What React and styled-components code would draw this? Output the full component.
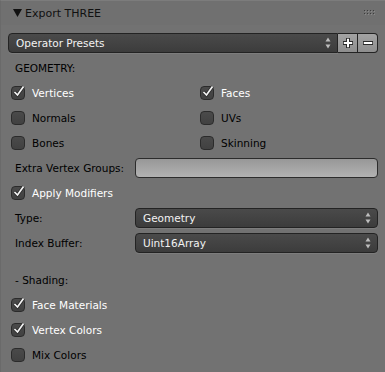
import React from 'react';
import styled, { createGlobalStyle } from 'styled-components';

const GlobalStyle = createGlobalStyle`
    html, body {
        margin: 0;
        padding: 0;
        background: #727272;
    }
    body {
        font-family: 'DejaVu Sans', 'Liberation Sans', sans-serif;
    }
`;

const Panel = styled.div`
    width: 385px;
    height: 372px;
    box-sizing: border-box;
    background: #727272;
    border-top: 1px solid #7c7c7c;
    border-left: 1px solid #6a6a6a;
    overflow: hidden;
`;

const Header = styled.div`
    height: 24px;
    display: flex;
    align-items: center;
    padding: 0 9px 0 12px;
    background: #707070;
    color: #111;
    font-size: 11px;

    & .title {
        margin-left: 3px;
        flex: 1;
    }
`;

const Body = styled.div`
    display: flex;
    flex-direction: column;
    gap: 5px;
    padding: 8px 7px 0 7px;
`;

const Row = styled.div`
    height: 20px;
    display: flex;
    align-items: center;
    margin-top: ${(props) => (props.spaced ? '12px' : '0')};
`;

const Columns = styled.div`
    height: 20px;
    display: grid;
    grid-template-columns: 189px 1fr;
    align-items: center;
`;

const FieldRow = styled.div`
    height: 20px;
    display: grid;
    grid-template-columns: 127px 1fr;
    align-items: center;
`;

const Label = styled.div`
    font-size: 10.5px;
    color: #000;
    padding-left: 7px;
    white-space: nowrap;
`;

const Menu = styled.div`
    flex: 1;
    height: 20px;
    box-sizing: border-box;
    display: flex;
    align-items: center;
    padding: 0 6px 0 7px;
    border: 1px solid #232323;
    border-radius: ${(props) => (props.joined ? '4px 0 0 4px' : '4px')};
    background: linear-gradient(#4a4a4a, #3c3c3c);
    box-shadow: 0 1px 0 rgba(255, 255, 255, 0.08);
    color: #f2f2f2;
    font-size: 10.5px;

    & span {
        flex: 1;
    }
`;

const TextField = styled.div`
    height: 20px;
    box-sizing: border-box;
    border: 1px solid #2c2c2c;
    border-radius: 4px;
    background: linear-gradient(#979797, #b2b2b2);
`;

const IconButton = styled.div`
    width: 20px;
    height: 20px;
    box-sizing: border-box;
    display: flex;
    align-items: center;
    justify-content: center;
    border: 1px solid #232323;
    border-left: none;
    border-radius: ${(props) => (props.last ? '0 4px 4px 0' : '0')};
    background: linear-gradient(#a3a3a3, #8e8e8e);
`;

const Check = styled.div`
    display: flex;
    align-items: center;
    margin-left: 3px;
    font-size: 10.5px;
    color: ${(props) => (props.on ? '#ffffff' : '#000000')};
    white-space: nowrap;
`;

const Box = styled.div`
    position: relative;
    width: 14px;
    height: 14px;
    box-sizing: border-box;
    margin-right: 7px;
    border: 1px solid #2b2b2b;
    border-radius: 4px;
    background: linear-gradient(#4a4a4a, #414141);

    & svg {
        position: absolute;
        left: 0px;
        top: -2px;
        overflow: visible;
    }
`;

function Arrows() {
    return (
        <svg width="6" height="12" viewBox="0 0 6 12">
            <path d="M3 0.5 L5.5 4.5 L0.5 4.5 Z" fill="#bdbdbd" />
            <path d="M3 11.5 L5.5 7.5 L0.5 7.5 Z" fill="#bdbdbd" />
        </svg>
    );
}

function CheckBox({ on, label }) {
    return (
        <Check on={on}>
            <Box>
                {on && (
                    <svg width="14" height="14" viewBox="0 0 14 14">
                        <path d="M2.5 7 L5.5 10 L11.5 1.5" fill="none" stroke="#2a2a2a" strokeWidth="3.2" />
                        <path d="M2.5 7 L5.5 10 L11.5 1.5" fill="none" stroke="#f4f4f4" strokeWidth="1.7" />
                    </svg>
                )}
            </Box>
            {label}
        </Check>
    );
}

function Dots() {
    const dots = [];
    for (let r = 0; r < 2; r++) {
        for (let c = 0; c < 4; c++) {
            dots.push(<rect key={`${r}-${c}`} x={c * 3} y={r * 3} width="1" height="1" fill="#3c3c3c" />);
            dots.push(<rect key={`h${r}-${c}`} x={c * 3 + 1} y={r * 3 + 1} width="1" height="1" fill="#8a8a8a" />);
        }
    }
    return (
        <svg width="12" height="6" viewBox="0 0 12 6">
            {dots}
        </svg>
    );
}

export default function App() {
    return (
        <>
            <GlobalStyle />
            <Panel>
                <Header>
                    <svg width="9" height="8" viewBox="0 0 9 8">
                        <path d="M0 0 L9 0 L4.5 8 Z" fill="#111" />
                    </svg>
                    <span className="title">Export THREE</span>
                    <Dots />
                </Header>
                <Body>
                    <Row>
                        <Menu joined>
                            <span>Operator Presets</span>
                            <Arrows />
                        </Menu>
                        <IconButton>
                            <svg width="14" height="14" viewBox="0 0 14 14">
                                <path d="M7 2 V12 M2 7 H12" stroke="#2a2a2a" strokeWidth="4" />
                                <path d="M7 2.8 V11.2 M2.8 7 H11.2" stroke="#ffffff" strokeWidth="2" />
                            </svg>
                        </IconButton>
                        <IconButton last>
                            <svg width="14" height="14" viewBox="0 0 14 14">
                                <path d="M2 7 H12" stroke="#2a2a2a" strokeWidth="4" />
                                <path d="M2.8 7 H11.2" stroke="#ffffff" strokeWidth="2" />
                            </svg>
                        </IconButton>
                    </Row>
                    <Row>
                        <Label>GEOMETRY:</Label>
                    </Row>
                    <Columns>
                        <CheckBox on label="Vertices" />
                        <CheckBox on label="Faces" />
                    </Columns>
                    <Columns>
                        <CheckBox label="Normals" />
                        <CheckBox label="UVs" />
                    </Columns>
                    <Columns>
                        <CheckBox label="Bones" />
                        <CheckBox label="Skinning" />
                    </Columns>
                    <FieldRow>
                        <Label>Extra Vertex Groups:</Label>
                        <TextField />
                    </FieldRow>
                    <Row>
                        <CheckBox on label="Apply Modifiers" />
                    </Row>
                    <FieldRow>
                        <Label>Type:</Label>
                        <Menu>
                            <span>Geometry</span>
                            <Arrows />
                        </Menu>
                    </FieldRow>
                    <FieldRow>
                        <Label>Index Buffer:</Label>
                        <Menu>
                            <span>Uint16Array</span>
                            <Arrows />
                        </Menu>
                    </FieldRow>
                    <Row spaced>
                        <Label>- Shading:</Label>
                    </Row>
                    <Row>
                        <CheckBox on label="Face Materials" />
                    </Row>
                    <Row>
                        <CheckBox on label="Vertex Colors" />
                    </Row>
                    <Row>
                        <CheckBox label="Mix Colors" />
                    </Row>
                </Body>
            </Panel>
        </>
    );
}
